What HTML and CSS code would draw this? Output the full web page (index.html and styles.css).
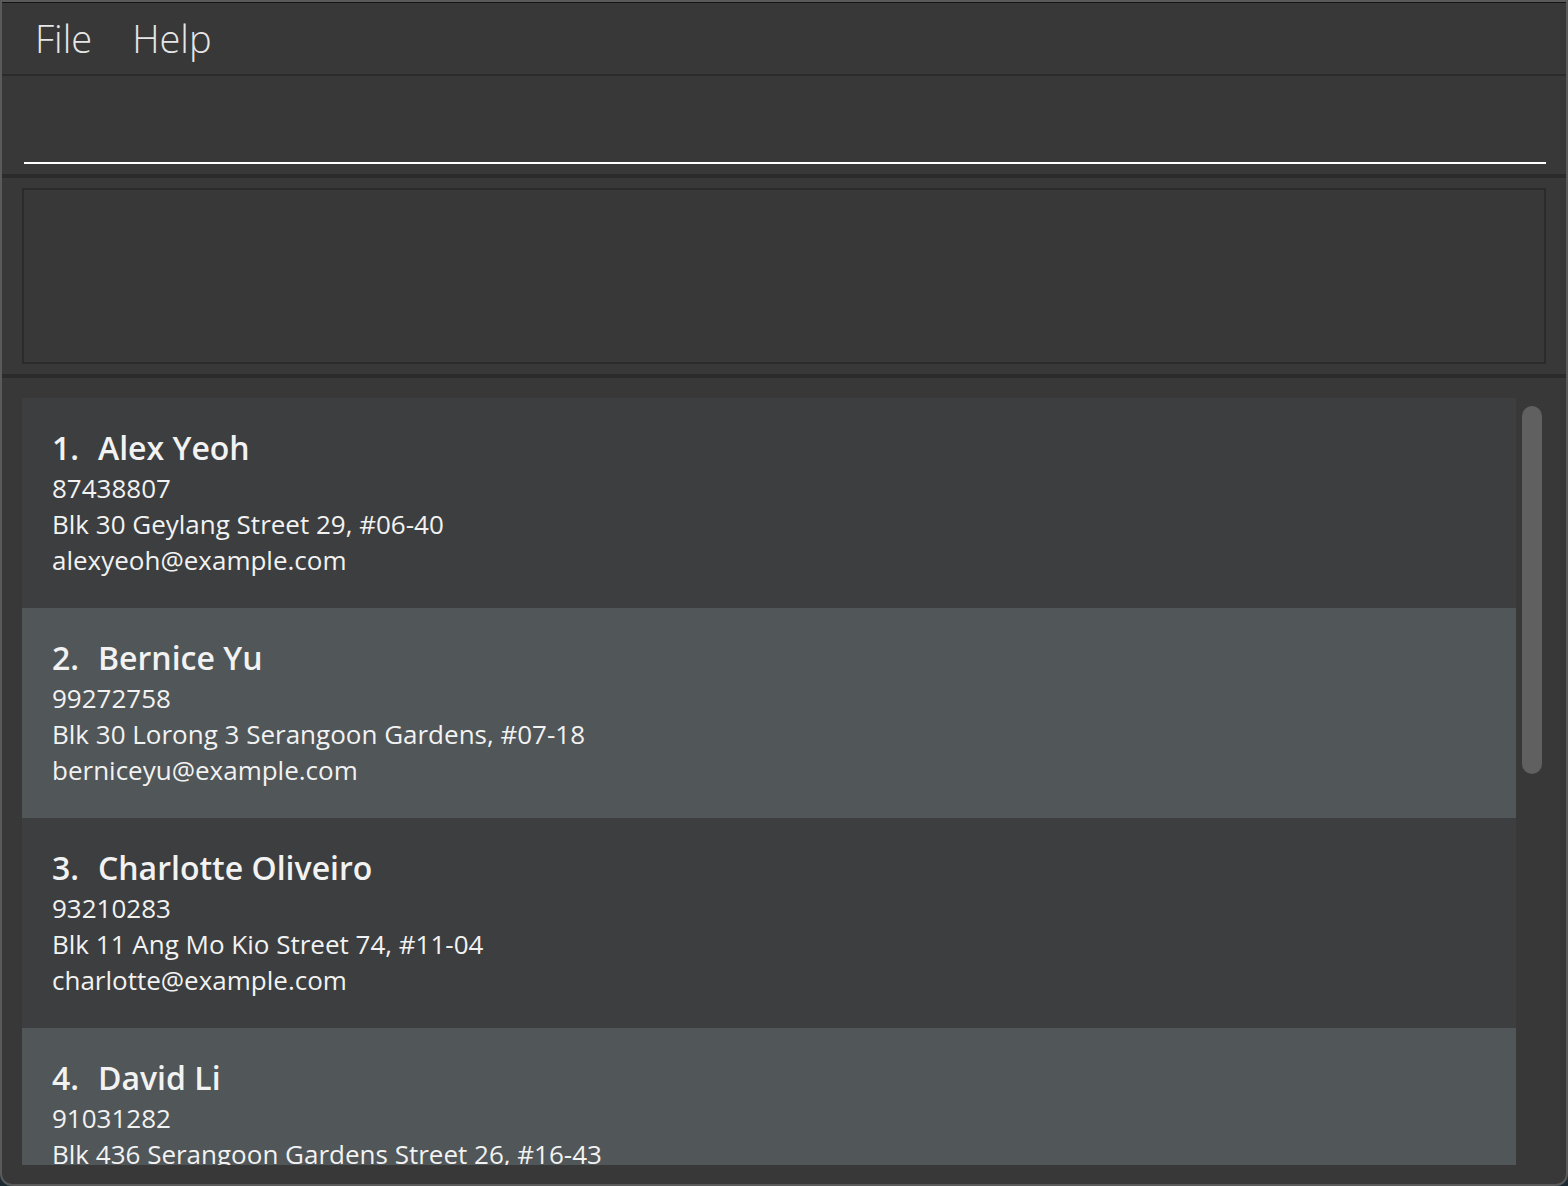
FILE: index.html
```html
<!DOCTYPE html>
<html lang="en">
<head>
    <meta charset="UTF-8">
    <meta name="viewport" content="width=device-width, initial-scale=1.0">
    <title>Address App</title>
    <link rel="stylesheet" href="styles.css">
</head>
<body>
    <div class="window">
        <div class="menubar">
            <span class="menu">File</span>
            <span class="menu">Help</span>
        </div>

        <div class="command-box">
            <input type="text" class="command-input">
        </div>

        <div class="result-panel">
            <div class="result-display"></div>
        </div>

        <div class="list-panel">
            <div class="list-view">
                <div class="cards">
                    <div class="card">
                        <div class="card-name"><span class="card-id">1.</span>Alex Yeoh</div>
                        <div class="card-line">87438807</div>
                        <div class="card-line">Blk 30 Geylang Street 29, #06-40</div>
                        <div class="card-line">alexyeoh@example.com</div>
                    </div>
                    <div class="card">
                        <div class="card-name"><span class="card-id">2.</span>Bernice Yu</div>
                        <div class="card-line">99272758</div>
                        <div class="card-line">Blk 30 Lorong 3 Serangoon Gardens, #07-18</div>
                        <div class="card-line">berniceyu@example.com</div>
                    </div>
                    <div class="card">
                        <div class="card-name"><span class="card-id">3.</span>Charlotte Oliveiro</div>
                        <div class="card-line">93210283</div>
                        <div class="card-line">Blk 11 Ang Mo Kio Street 74, #11-04</div>
                        <div class="card-line">charlotte@example.com</div>
                    </div>
                    <div class="card">
                        <div class="card-name"><span class="card-id">4.</span>David Li</div>
                        <div class="card-line">91031282</div>
                        <div class="card-line">Blk 436 Serangoon Gardens Street 26, #16-43</div>
                        <div class="card-line">lidavid@example.com</div>
                    </div>
                </div>
                <div class="scrollbar">
                    <div class="thumb"></div>
                </div>
            </div>
        </div>
    </div>
</body>
</html>
```

FILE: styles.css
```css
body {
    margin: 0;
    padding: 0;
    background-color: #1b2a30;
    font-family: "Open Sans", "Liberation Sans", sans-serif;
}
.window {
    width: 1568px;
    height: 1186px;
    box-sizing: border-box;
    border: 2px solid #5a5a5a;
    border-radius: 0 0 12px 12px;
    background-color: #383838;
    display: flex;
    flex-direction: column;
    overflow: hidden;
}
.menubar {
    height: 71px;
    border-top: 1px solid #151515;
    border-bottom: 2px solid #2b2b2b;
    display: flex;
    align-items: center;
    padding-left: 33px;
    gap: 40px;
}
.menu {
    color: #e6e6e6;
    font-size: 38px;
    font-weight: 300;
    margin-top: -2px;
}
.command-box {
    height: 102px;
    padding: 0 20px 10px 22px;
    box-sizing: border-box;
    display: flex;
    align-items: flex-end;
    border-bottom: 4px solid #2b2b2b;
}
.command-input {
    width: 100%;
    height: 60px;
    margin: 0;
    padding: 0;
    border: none;
    border-bottom: 2px solid #ffffff;
    background: transparent;
    outline: none;
}
.result-panel {
    padding: 10px 20px 10px 20px;
    border-bottom: 4px solid #2b2b2b;
}
.result-display {
    height: 172px;
    border: 2px solid #2b2b2b;
}
.list-panel {
    flex: 1;
    padding: 20px 20px 19px 20px;
    display: flex;
    min-height: 0;
}
.list-view {
    flex: 1;
    display: flex;
    overflow: hidden;
}
.cards {
    flex: 1;
    display: flex;
    flex-direction: column;
}
.card {
    flex: 0 0 210px;
    box-sizing: border-box;
    padding: 28px 30px 0 30px;
    background-color: #3c3e3f;
    color: #f2f2f2;
}
.card:nth-child(even) {
    background-color: #515658;
}
.card-name {
    font-size: 32px;
    font-weight: 600;
    margin-bottom: 1px;
}
.card-id {
    display: inline-block;
    width: 46px;
}
.card-line {
    font-size: 26px;
    line-height: 36px;
}
.scrollbar {
    flex: 0 0 30px;
}
.thumb {
    width: 20px;
    height: 368px;
    margin: 8px 0 0 6px;
    border-radius: 10px;
    background-color: #606060;
}
```
